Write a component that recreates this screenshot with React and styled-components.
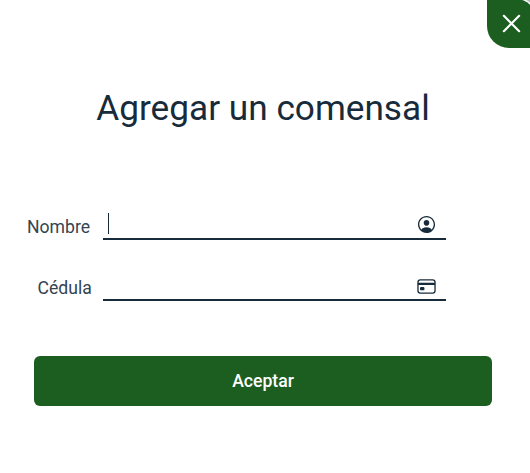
import React from 'react';
import styled, { createGlobalStyle } from 'styled-components';
import { IoCardOutline, IoCloseOutline, IoPersonCircleOutline } from 'react-icons/io5';

const GlobalStyle = createGlobalStyle`
  * { box-sizing: border-box; }
  html, body { margin: 0; overflow: hidden; background: #fff; }
  body { font-family: Roboto, sans-serif; color: #172b3a; }
`;

const Dialog = styled.main`
  display: flex;
  flex-direction: column;
  width: 530px;
  height: 473px;
  background: #fff;
  overflow: hidden;
`;

const TopBar = styled.header`
  display: flex;
  justify-content: flex-end;
  height: 48px;
`;

const CloseCorner = styled.div`
  width: 43px;
  height: 48px;
  overflow: hidden;
  background: linear-gradient(90deg, transparent 50%, #b5b5b5 50%) top / 100% 20px no-repeat;
`;

const CloseButton = styled.button`
  display: flex;
  align-items: center;
  width: 49px;
  height: 49px;
  margin-top: -1px;
  padding: 0 0 0 7px;
  border: 0;
  border-radius: 0 20px 0 22px;
  background: #1b5e20;
  box-shadow: 0 0 0 1.5px #fff;
  color: #fff;
  font-size: 35px;
  svg { flex: none; }
`;

const Title = styled.h1`
  margin: 36px 4px 0 0;
  font-size: 35.2px;
  line-height: 48px;
  font-weight: 400;
  text-align: center;
  white-space: nowrap;
`;

const Fields = styled.form`
  display: grid;
  row-gap: 21px;
  margin: 68px 84px 0 27px;
`;

const Field = styled.label`
  display: grid;
  grid-template-columns: 76px 343px;
  height: 40px;
`;

const LabelText = styled.span`
  padding: 15px 0 0 ${({ $indent = 0 }) => $indent}px;
  font-size: 17.6px;
  line-height: 24px;
  color: #344451;
`;

const InputLine = styled.span`
  display: flex;
  align-items: center;
  justify-content: space-between;
  padding: ${({ $top = 10 }) => $top}px 9px 0 5px;
  border-bottom: 2px solid #172b3a;
  font-size: 21px;
  svg { flex: none; }
`;

const Caret = styled.span`
  width: 1px;
  height: 21px;
  margin-top: -2px;
  background: ${({ $visible }) => ($visible ? '#172b3a' : 'transparent')};
`;

const SubmitButton = styled.button`
  width: 458px;
  height: 50px;
  margin: 55px 0 0 34px;
  padding: 0;
  border: 0;
  border-radius: 6px;
  background: #1b5e20;
  color: #fff;
  font: 500 17.6px/50px Roboto, sans-serif;
`;

export default function App() {
  return (
    <>
      <GlobalStyle />
      <Dialog>
        <TopBar>
          <CloseCorner>
            <CloseButton type="button" aria-label="Cerrar"><IoCloseOutline /></CloseButton>
          </CloseCorner>
        </TopBar>
        <Title>Agregar un comensal</Title>
        <Fields>
          <Field>
            <LabelText>Nombre</LabelText>
            <InputLine><Caret $visible /><IoPersonCircleOutline /></InputLine>
          </Field>
          <Field>
            <LabelText $indent={10.6}>Cédula</LabelText>
            <InputLine $top={12}><Caret /><IoCardOutline /></InputLine>
          </Field>
        </Fields>
        <SubmitButton type="button">Aceptar</SubmitButton>
      </Dialog>
    </>
  );
}
